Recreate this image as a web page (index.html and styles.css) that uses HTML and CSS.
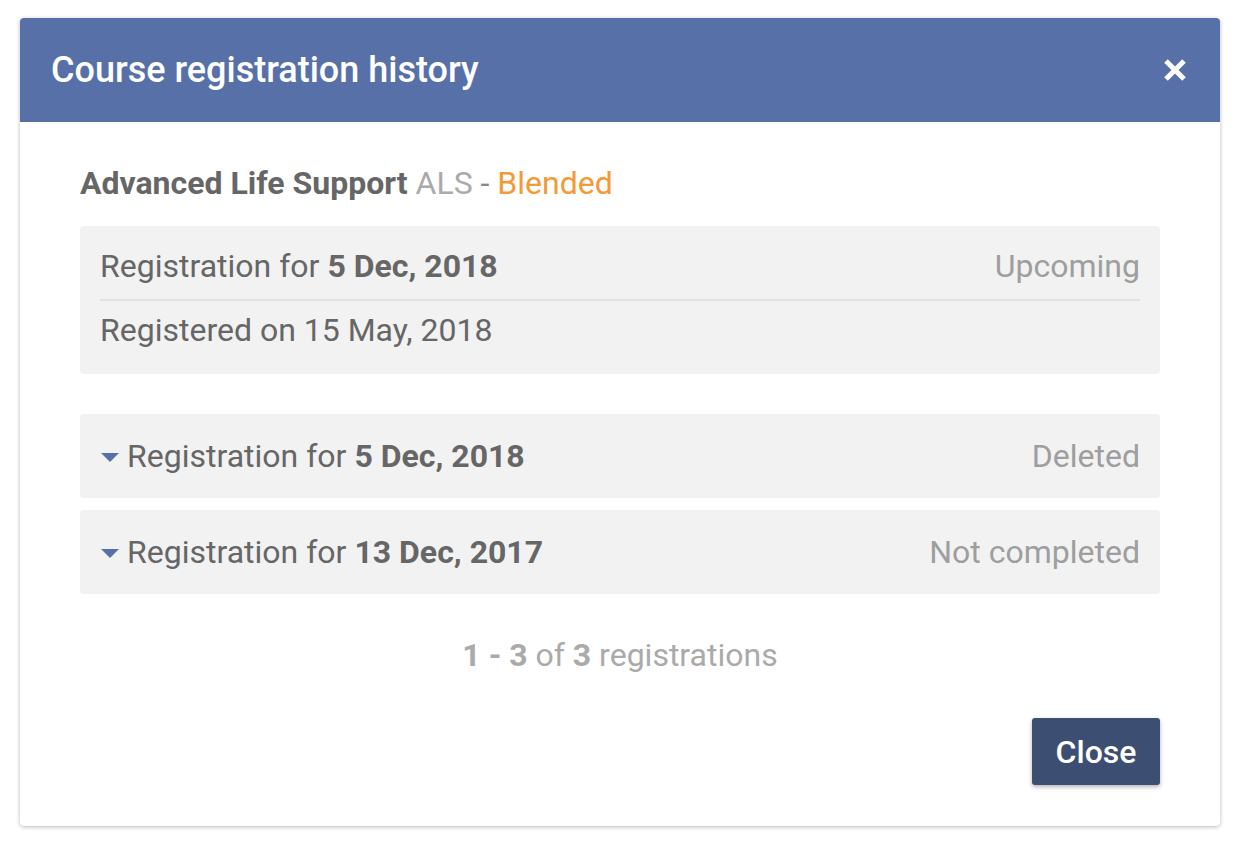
FILE: index.html
```html
<!DOCTYPE html>
<html>
<head>
<meta charset="utf-8">
<link rel="stylesheet" href="styles.css">
</head>
<body>
<div class="dialog">
  <div class="dialog-header">
    <h1 class="dialog-title">Course registration history</h1>
    <svg class="close-x" width="26" height="26" viewBox="0 0 26 26"><path d="M4 4 L22 22 M22 4 L4 22" stroke="#fff" stroke-width="5" stroke-linecap="butt"/></svg>
  </div>
  <div class="dialog-body">
    <div class="course"><b class="course-name">Advanced Life Support</b> <span class="course-code">ALS</span> <span class="course-sep">-</span> <span class="course-type">Blended</span></div>
    <div class="card card-open">
      <div class="card-row">
        <span class="card-title">Registration for <b>5 Dec, 2018</b></span>
        <span class="status">Upcoming</span>
      </div>
      <div class="card-detail">Registered on 15 May, 2018</div>
    </div>
    <div class="list">
      <div class="card">
        <div class="card-row">
          <span class="card-title"><span class="caret"></span>Registration for <b>5 Dec, 2018</b></span>
          <span class="status">Deleted</span>
        </div>
      </div>
      <div class="card">
        <div class="card-row">
          <span class="card-title"><span class="caret"></span>Registration for <b>13 Dec, 2017</b></span>
          <span class="status">Not completed</span>
        </div>
      </div>
    </div>
    <div class="pager"><b>1 - 3</b> of <b>3</b> registrations</div>
    <div class="actions"><button class="btn">Close</button></div>
  </div>
</div>
</body>
</html>
```
FILE: styles.css
```css
html, body { margin: 0; padding: 0; background: #fff; }
body { font-family: Roboto, "Liberation Sans", sans-serif; padding: 18px 20px; }
.dialog {
  width: 1200px;
  background: #fff;
  border-radius: 4px;
  box-shadow: 0 1px 4px rgba(0,0,0,0.28);
  overflow: hidden;
}
.dialog-header {
  height: 104px;
  background: #5870a8;
  display: flex;
  align-items: center;
  justify-content: space-between;
  padding: 0 32px 0 31px;
  box-sizing: border-box;
}
.dialog-title {
  margin: 0;
  color: #fff;
  font-size: 36px;
  font-weight: 500;
  line-height: 40px;
}
.close-x { display: block; }
.dialog-body { padding: 44px 60px 41px; }
.course { font-size: 32px; color: #666; line-height: 34px; margin-bottom: 26px; }
.course-name { font-weight: 700; color: #666; }
.course-code { color: #aaa; }
.course-sep { color: #888; }
.course-type { color: #f39a37; }
.card { background: #f2f2f2; border-radius: 4px; padding: 0 20px; }
.card-open { height: 148px; box-sizing: border-box; margin-bottom: 40px; }
.card-open .card-row { height: 75px; border-bottom: 2px solid #e3e3e3; box-sizing: border-box; padding-top: 7px; }
.card-detail { font-size: 32px; color: #666; line-height: 32px; padding-top: 13px; }
.card-row { display: flex; align-items: center; justify-content: space-between; height: 84px; }
.card-title { font-size: 32px; color: #666; display: flex; align-items: center; line-height: 36px; }
.card-title b { font-weight: 700; margin-left: 0.25em; }
.status { font-size: 32px; color: #9e9e9e; line-height: 36px; }
.list { display: flex; flex-direction: column; gap: 12px; }
.caret {
  width: 0; height: 0;
  border-left: 9px solid transparent;
  border-right: 9px solid transparent;
  border-top: 9px solid #5870a8;
  margin: 2px 8px 0 1px;
}
.pager { text-align: center; font-size: 32px; color: #aaa; margin-top: 43px; line-height: 36px; }
.pager b { font-weight: 700; }
.actions { display: flex; justify-content: flex-end; margin-top: 45px; }
.btn {
  width: 128px; height: 67px;
  background: #3d4e73;
  color: #fff;
  border: none;
  border-radius: 3px;
  font-family: Roboto, "Liberation Sans", sans-serif;
  font-size: 32px;
  font-weight: 500;
  padding: 0;
  box-shadow: 0 2px 4px rgba(0,0,0,0.3);
}
```
